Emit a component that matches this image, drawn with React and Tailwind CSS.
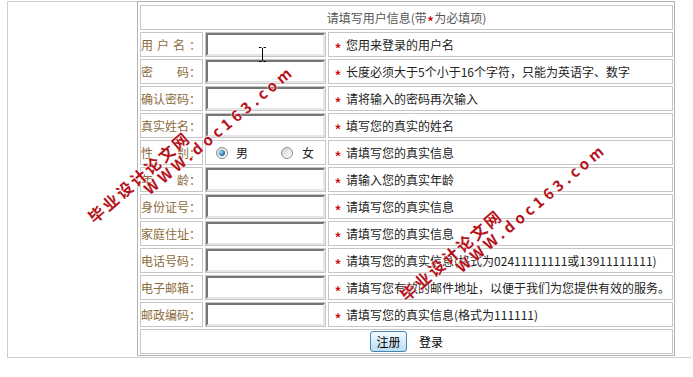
import React from "react";

const rows = [
  { label: <><span className="tracking-[4px]">用户名</span>：</>, desc: "您用来登录的用户名" },
  { label: "密　　码：", desc: "长度必须大于5个小于16个字符，只能为英语字、数字" },
  { label: "确认密码：", desc: "请将输入的密码再次输入" },
  { label: "真实姓名：", desc: "填写您的真实的姓名" },
  { label: "性　　别：", desc: "请填写您的真实信息", gender: true },
  { label: "年　　龄：", desc: "请输入您的真实年龄" },
  { label: "身份证号：", desc: "请填写您的真实信息" },
  { label: "家庭住址：", desc: "请填写您的真实信息" },
  { label: "电话号码：", desc: "请填写您的真实信息(格式为02411111111或13911111111)" },
  { label: "电子邮箱：", desc: "请填写您有效的邮件地址，以便于我们为您提供有效的服务。" },
  { label: "邮政编码：", desc: "请填写您的真实信息(格式为111111)" },
];

function Radio({ checked }) {
  return (
    <span className="w-[12px] h-[12px] rounded-full border border-[#8e8f8f] bg-linear-to-br from-[#d2d2d2] to-[#ffffff] flex items-center justify-center shrink-0">
      {checked && (
        <span className="w-[6px] h-[6px] rounded-full bg-[radial-gradient(circle_at_35%_35%,#9fdcf8,#2a78b4_60%,#184f80)]" />
      )}
    </span>
  );
}

function Cell({ children, className = "" }) {
  return (
    <div className={"border border-[#c6c6c6] flex items-center " + className}>{children}</div>
  );
}

function Watermark({ left, top }) {
  return (
    <>
      <div
        className="absolute origin-left rotate-[-41deg] text-[16px] leading-[16px] font-bold tracking-[2.5px] text-[#b5121b] whitespace-nowrap [text-shadow:0_0_2px_#fff,0_0_1px_#fff]"
        style={{ left, top }}
      >
        毕业设计论文网
      </div>
      <div
        className="absolute origin-left rotate-[-40deg] text-[15px] leading-[16px] font-bold tracking-[4px] text-[#b5121b] whitespace-nowrap [text-shadow:0_0_2px_#fff,0_0_1px_#fff]"
        style={{ left: left + 56, top: top - 28 }}
      >
        WWW.doc163.com
      </div>
    </>
  );
}

export default function App() {
  return (
    <div className="relative w-[693px] h-[377px] bg-white overflow-hidden font-['Noto_Sans_CJK_SC','Noto_Sans',sans-serif] text-[12px]">
      <div className="ml-[7px] mt-[1px] w-[684px] h-[357px] border-l border-b border-[#cfcfcf] flex items-start">
        <div className="w-[129px] h-[356px] border-t border-[#cfcfcf]" />
        <div className="w-[538px] h-[355px] border border-[#b2b2b2] pt-[3px] pl-[2px] pr-[1px] pb-[1px]">
          <div className="grid grid-cols-[63px_121px_345px] auto-rows-[25px] gap-[2px]">
            <Cell className="col-span-3 justify-center text-[#555]">
              请填写用户信息(带<span className="text-[#c00] text-[16px] leading-[12px] translate-y-[4px]">*</span>为必填项)
            </Cell>
            {rows.map((r, i) => (
              <React.Fragment key={i}>
                <Cell className="text-[#8c6b3c] whitespace-nowrap">{r.label}</Cell>
                <Cell className="items-stretch">
                  {r.gender ? (
                    <div className="flex items-center pl-[10px] text-[#222]">
                      <Radio checked />
                      <span className="ml-[8px]">男</span>
                      <span className="ml-[33px]"><Radio /></span>
                      <span className="ml-[9px]">女</span>
                    </div>
                  ) : (
                    <div className="w-[119px] h-[23px] bg-white border-2 border-t-[#767676] border-l-[#767676] border-b-[#e6e6e6] border-r-[#e6e6e6]" />
                  )}
                </Cell>
                <Cell className="pl-[3px] text-[#222] whitespace-nowrap">
                  <span className="w-[12px] text-center text-[#c00] text-[16px] leading-[12px] translate-y-[4px]">*</span>
                  <span className="ml-[2px]">{r.desc}</span>
                </Cell>
              </React.Fragment>
            ))}
            <Cell className="col-span-3 justify-center">
              <button className="w-[37px] h-[21px] rounded-[3px] border border-[#4585b3] bg-linear-to-b from-[#f4fbff] to-[#b9def2] text-[12px] leading-[18px] text-black flex items-center justify-center">
                注册
              </button>
              <span className="ml-[12px] text-black">登录</span>
            </Cell>
          </div>
        </div>
        <div className="flex-1" />
      </div>

      <Watermark left={90} top={211} />
      <Watermark left={402} top={289} />

      <svg className="absolute left-[258px] top-[46px]" width="9" height="17" viewBox="0 0 9 17">
        <path d="M1 1.5h2.5M5.5 1.5H8M4.5 2v13M1 15.5h2.5M5.5 15.5H8" stroke="#000" strokeWidth="1" fill="none" />
      </svg>
    </div>
  );
}
